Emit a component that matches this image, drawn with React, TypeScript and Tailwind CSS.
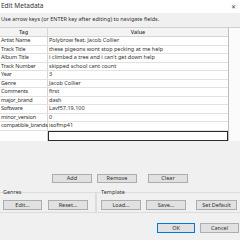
import React from "react";

const rows: [string, string][] = [
  ["Artist Name", "Polybrow feat. Jacob Collier"],
  ["Track Title", "these pigeons wont stop pecking at me help"],
  ["Album Title", "i climbed a tree and i can't get down help"],
  ["Track Number", "skipped school cant count"],
  ["Year", "3"],
  ["Genre", "Jacob Collier"],
  ["Comments", "first"],
  ["major_brand", "dash"],
  ["Software", "Lavf57.19.100"],
  ["minor_version", "0"],
  ["compatible_brands", "isofmp41"],
];

function Btn({ label, w = "w-[40px]", primary = false }: { label: string; w?: string; primary?: boolean }) {
  return (
    <div
      className={`${w} h-full shrink-0 flex items-center justify-center bg-[#e1e1e1] border ${
        primary ? "border-[#0078d7]" : "border-[#adadad]"
      } text-[5.5px] text-[#333]`}
    >
      {label}
    </div>
  );
}

export default function App() {
  return (
    <div
      className="w-[240px] h-[240px] overflow-hidden bg-[#f0f0f0] flex flex-col text-[#333]"
      style={{ fontFamily: '"Noto Sans", "Open Sans", sans-serif' }}
    >
      {/* title bar */}
      <div className="h-[13px] shrink-0 bg-white flex items-center justify-between pl-[1px] pr-[4px]">
        <span className="text-[6.5px] leading-none text-[#333]">Edit Metadata</span>
        <span className="text-[6px] leading-none text-[#444]">✕</span>
      </div>
      {/* instruction */}
      <div className="h-[14px] shrink-0 flex items-center pl-[1px]">
        <span className="text-[5.5px] leading-none text-[#333]">
          Use arrow keys (or ENTER key after editing) to navigate fields.
        </span>
      </div>
      {/* table */}
      <div className="h-[114px] shrink-0 bg-white border-t border-[#cfcfcf] flex">
        <div className="w-[229px] flex flex-col border-r border-[#bdbdbd]">
          <div className="h-[9px] flex bg-[#f3f3f3] border-b border-[#d5d5d5] text-[5.5px] font-medium text-[#333]">
            <div className="w-[48px] flex items-center justify-center border-r border-[#d5d5d5]">Tag</div>
            <div className="flex-1 flex items-center justify-center">Value</div>
          </div>
          {rows.map(([t, v]) => (
            <div key={t} className="h-[8.5px] flex border-b border-[#e2e2e2] text-[5.5px] text-[#333] leading-none">
              <div className="w-[48px] shrink-0 flex items-center pl-[1px] border-r border-[#d5d5d5] whitespace-nowrap tracking-[-0.15px]">
                {t}
              </div>
              <div className="flex-1 flex items-center pl-[1px] whitespace-nowrap overflow-hidden">{v}</div>
            </div>
          ))}
          <div className="h-[10px] flex">
            <div className="w-[48px] border-r border-[#d5d5d5]" />
            <div className="flex-1 border border-[#2a2a2a] bg-white" />
          </div>
        </div>
        <div className="flex-1 bg-[#fbfbfb]" />
      </div>
      <div className="h-[33px] shrink-0" />
      {/* add remove clear */}
      <div className="h-[9px] shrink-0 flex pl-[52px]">
        <Btn label="Add" />
        <div className="w-[5px]" />
        <Btn label="Remove" />
        <div className="w-[11px]" />
        <Btn label="Clear" />
      </div>
      <div className="h-[6px] shrink-0" />
      {/* groups */}
      <div className="h-[24px] shrink-0 flex">
        <fieldset className="ml-[-5px] w-[97px] h-full border border-[#dcdcdc] px-[7px] pb-[2px]">
          <legend className="px-[0px] text-[5.5px] leading-[7px] text-[#333]">Genres</legend>
          <div className="h-[9.5px] mt-[4px] flex">
            <Btn label="Edit..." w="w-[39px]" />
            <div className="w-[6px]" />
            <Btn label="Reset..." w="w-[40px]" />
          </div>
        </fieldset>
        <div className="w-[5px]" />
        <fieldset className="w-[150px] h-full border border-[#dcdcdc] px-[4px] pb-[2px]">
          <legend className="px-[0px] text-[5.5px] leading-[7px] text-[#333]">Template</legend>
          <div className="h-[9.5px] mt-[4px] flex">
            <Btn label="Load..." />
            <div className="w-[5px]" />
            <Btn label="Save..." />
            <div className="w-[10px]" />
            <Btn label="Set Default" w="w-[41px]" />
          </div>
        </fieldset>
      </div>
      <div className="h-[10px] shrink-0" />
      <div className="h-[10px] shrink-0 flex pl-[157px]">
        <Btn label="OK" w="w-[38px]" primary />
        <div className="w-[5px]" />
        <Btn label="Cancel" w="w-[39px]" />
      </div>
    </div>
  );
}
